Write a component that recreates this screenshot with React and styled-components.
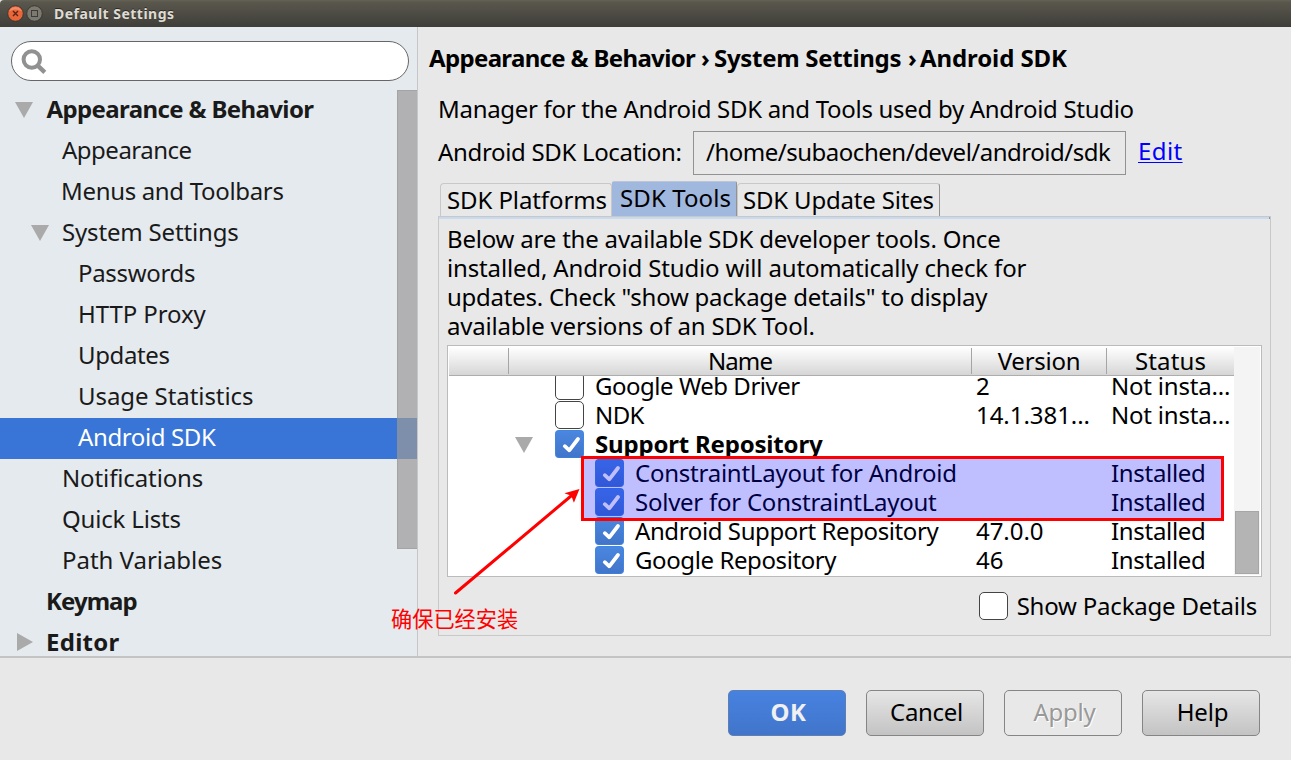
import React from 'react';
import styled, { createGlobalStyle, css } from 'styled-components';

const GlobalStyle = createGlobalStyle`
  * { box-sizing: border-box; }
  body {
    margin: 0;
    background: #e8e8e8;
    color: #000;
    font: 24px/33px "Noto Sans", "Noto Sans CJK SC", sans-serif;
    overflow: hidden;
  }
`;

const Window = styled.div`
  position: relative;
  width: 1291px;
  height: 760px;
  display: flex;
  flex-direction: column;
  background: #e8e8e8;
  overflow: hidden;
`;

const Text = styled.span`
  display: block;
  white-space: pre;
  letter-spacing: ${(p) => p.$ls || 0}px;
  margin-left: ${(p) => p.$ml || 0}px;
  font-weight: ${(p) => (p.$bold ? 700 : 400)};
`;

const TitleBar = styled.header`
  flex: none;
  height: 27px;
  display: flex;
  align-items: center;
  padding-left: 7px;
  background: linear-gradient(#656356 0, #5a584d 2px, #3e3d39 100%);
  color: #dfdbd2;
  font-size: 14px;
  line-height: 26px;
  border-top-left-radius: 4px;
`;

const TitleText = styled(Text)`
  text-shadow: 0 -1px 0 #2c2b28;
`;

const WindowButton = styled.svg`
  width: 17px;
  height: 17px;
  margin-right: 2px;
`;

const Body = styled.div`
  flex: none;
  height: 631px;
  display: flex;
  border-bottom: 2px solid #c4c4c4;
`;

const Sidebar = styled.aside`
  position: relative;
  flex: none;
  width: 418px;
  padding-top: 14px;
  background: #e5eaee;
  border-right: 1px solid #c4c6c8;
  color: #1a1a1a;
  overflow: hidden;
`;

const Search = styled.div`
  width: 398px;
  height: 40px;
  margin: 0 0 9px 11px;
  padding: 7px 0 0 9px;
  border: 1px solid #666;
  border-radius: 20px;
  background: #fff;
`;

const TreeRow = styled.div`
  display: flex;
  height: 41px;
  padding: 2px 0 0 ${(p) => p.$indent}px;
  ${(p) => p.$selected && css`
    background: #3875d7;
    color: #fff;
  `}
`;

const TreeArrow = styled.svg`
  flex: none;
  width: 18px;
  height: 18px;
  margin: 8px 13px 0 0;
`;

const SidebarScroll = styled.div`
  position: absolute;
  right: 0;
  top: 63px;
  width: 20px;
  height: 459px;
  background: rgba(155, 154, 155, 0.71);
  border: 1px solid rgba(140, 140, 140, 0.35);
  border-right: 0;
`;

const Main = styled.main`
  flex: 1;
  padding: 14px 20px 0 20px;
`;

const Breadcrumb = styled.nav`
  display: flex;
  margin: 0 0 18px -9px;
`;

const Crumb = styled(Text)`
  width: ${(p) => p.$w}px;
`;

const LocationRow = styled.div`
  display: flex;
  height: 44px;
  margin-top: 6px;
`;

const LocationLabel = styled(Text)`
  width: 255px;
  padding-top: 4px;
`;

const PathField = styled.div`
  width: 433px;
  border: 1px solid #929292;
  padding: 3px 0 0 12px;
`;

const EditLink = styled(Text)`
  padding-top: 3px;
  color: #00f;
  text-decoration: underline;
  text-decoration-thickness: 1px;
  text-underline-offset: 2px;
  text-decoration-skip-ink: none;
`;

const Tabs = styled.div`
  display: flex;
  align-items: flex-end;
  height: 35px;
  margin-top: 6px;
  padding-left: 2px;
`;

const Tab = styled.div`
  width: ${(p) => p.$w}px;
  height: 33px;
  padding-left: ${(p) => p.$pl}px;
  line-height: 31px;
  border: 1px solid #c8c8c8;
  border-bottom: 0;
  border-right-color: ${(p) => (p.$last ? '#929292' : '#c8c8c8')};
  border-radius: 4px 3px 0 0;
  ${(p) => p.$active && css`
    height: 35px;
    background: #a0b7de;
    border-color: #a0b7de;
    border-top-color: #bcc6d8;
    border-right-color: #929292;
    border-radius: 2px 2px 0 0;
  `}
`;

const Panel = styled.section`
  height: 420px;
  width: 833px;
  padding: 0 8px;
  border: 1px solid #c8c8c8;
`;

const PanelAccent = styled.div`
  height: 2px;
  margin: 0 -8px 5px;
  background: #c8daf0;
  border-right: 1px solid #929292;
`;

const Line = styled(Text)`
  line-height: 29px;
`;

const Table = styled.div`
  display: flex;
  width: 815px;
  height: 232px;
  margin-top: 5px;
  padding: 1px;
  border: 1px solid #bbb;
  background: #fff;
`;

const Grid = styled.div`
  width: 785px;
`;

const HeaderRow = styled.div`
  display: flex;
  height: 29px;
  padding-top: 1px;
  background: linear-gradient(#fff, #d6d6d6);
  border-bottom: 1px solid #adadad;
`;

const HeaderCell = styled.div`
  width: ${(p) => p.$w}px;
  height: 26px;
  display: flex;
  justify-content: center;
  line-height: 26px;
  border-right: ${(p) => (p.$last ? 0 : 1)}px solid #a5a5a5;
`;

const Rows = styled.div`
  height: 200px;
  overflow: hidden;
`;

const Row = styled.div`
  display: flex;
  height: 29px;
  line-height: 29px;
  &:first-child { margin-top: -5px; }
`;

const NameCell = styled.div`
  display: flex;
  width: 525px;
  padding-left: ${(p) => p.$indent}px;
`;

const VersionCell = styled.div`
  width: 135px;
  padding-left: 2px;
`;

const StatusCell = styled.div`
  padding-left: 2px;
`;

const TableArrow = styled.svg`
  width: 18px;
  height: 18px;
  margin: 6px 22px 0 0;
`;

const Box = styled.span`
  flex: none;
  display: block;
  width: 29px;
  height: 28px;
  margin: 1px 11px 0 0;
  border: 1px solid #444;
  border-radius: 5px;
  background: #fff;
  ${(p) => p.$checked && css`
    border-color: #3f86e0;
    border-bottom-color: #3c7edb;
    border-radius: 4px;
    background: linear-gradient(#4a87e0, #4175ca);
  `}
  svg { display: block; }
`;

const Track = styled.div`
  width: 26px;
  height: 228px;
  padding: 164px 1px 0;
  background: #f4f4f4;
`;

const Thumb = styled.div`
  height: 63px;
  background: #b4b4b4;
  border: 1px solid #a6a6a6;
`;

const DetailsOption = styled.label`
  display: flex;
  justify-content: flex-end;
  margin-top: 14px;
  padding-right: 5px;
`;

const DetailsText = styled(Text)`
  line-height: 29px;
`;

const Footer = styled.footer`
  display: flex;
  justify-content: flex-end;
  gap: 20px;
  padding: 32px 31px 0 0;
`;

const Button = styled.button`
  width: 118px;
  height: 46px;
  padding: 0 0 3px 3px;
  display: flex;
  justify-content: center;
  align-items: center;
  border: 1px solid #858585;
  border-radius: 5px;
  background: linear-gradient(#e6e6e6, #c3c3c3);
  color: #000;
  font: inherit;
  ${(p) => p.$primary && css`
    border-color: #5f7fb3;
    background: linear-gradient(#4782e0, #4175ca);
    color: #f0f0f0;
  `}
  ${(p) => p.$disabled && css`
    background: transparent;
    color: #999;
    text-shadow: 1px 1px 0 #fff;
  `}
`;

const Highlight = styled.div`
  position: absolute;
  left: 581px;
  top: 456px;
  width: 643px;
  height: 65px;
  border: 3px solid #f00;
  background: rgba(0, 0, 255, 0.25);
`;

const Arrow = styled.svg`
  position: absolute;
  left: 440px;
  top: 480px;
  width: 150px;
  height: 125px;
`;

const Note = styled.div`
  position: absolute;
  left: 391px;
  top: 602px;
  color: #f00;
  font: 21.2px/32px "Noto Sans CJK SC", sans-serif;
  white-space: nowrap;
`;

const Down = ({ as: C }) => (
  <C viewBox="0 0 18 18"><path d="M0 2H18L9 18Z" fill="#aaa" /></C>
);
const Right = ({ as: C }) => (
  <C viewBox="0 0 18 18"><path d="M2 0V18L18 9Z" fill="#aaa" /></C>
);

const Check = ({ checked }) => (
  <Box $checked={checked}>
    {checked && (
      <svg width="27" height="26" viewBox="0 0 27 26">
        <path d="M8.8 15.2L13.3 19.3L22 8" fill="none" stroke="#3a66b4" strokeWidth="3.6" strokeLinecap="round" strokeLinejoin="round" opacity=".45" transform="translate(0 1)" />
        <path d="M8.8 15.2L13.3 19.3L22 8" fill="none" stroke="#fff" strokeWidth="3.8" strokeLinecap="round" strokeLinejoin="round" />
      </svg>
    )}
  </Box>
);

const tree = [
  { t: 'Appearance & Behavior', indent: 15, arrow: 'down', bold: true, ls: -0.62, ml: 0.5 },
  { t: 'Appearance', indent: 62, ls: -0.5 },
  { t: 'Menus and Toolbars', indent: 61, ls: -0.33 },
  { t: 'System Settings', indent: 31, arrow: 'down', ls: -0.17 },
  { t: 'Passwords', indent: 78, ls: -0.32 },
  { t: 'HTTP Proxy', indent: 78, ls: -0.1 },
  { t: 'Updates', indent: 78, ls: -0.37 },
  { t: 'Usage Statistics', indent: 78, ls: -0.07 },
  { t: 'Android SDK', indent: 78, ls: -0.38, selected: true },
  { t: 'Notifications', indent: 62, ls: -0.12 },
  { t: 'Quick Lists', indent: 62, ls: -0.18 },
  { t: 'Path Variables', indent: 62, ls: -0.03 },
  { t: 'Keymap', indent: 46, bold: true, ls: -0.95 },
  { t: 'Editor', indent: 15, arrow: 'right', bold: true, ls: 0.26 },
];

const packages = [
  { t: 'Google Web Driver', ls: -0.48, indent: 106, version: '2', status: 'Not insta...' },
  { t: 'NDK', ls: -0.6, indent: 106, version: '14.1.381...', status: 'Not insta...' },
  { t: 'Support Repository', ls: -0.19, indent: 66, parent: true, checked: true },
  { t: 'ConstraintLayout for Android', ls: -0.24, indent: 146, checked: true, status: 'Installed' },
  { t: 'Solver for ConstraintLayout', ls: -0.25, indent: 146, checked: true, status: 'Installed' },
  { t: 'Android Support Repository', ls: -0.4, indent: 146, checked: true, version: '47.0.0', status: 'Installed' },
  { t: 'Google Repository', ls: -0.4, indent: 146, checked: true, version: '46', status: 'Installed' },
];

export default function App() {
  return (
    <Window>
      <GlobalStyle />
      <TitleBar>
        <WindowButton viewBox="0 0 17 17">
          <circle cx="8.5" cy="8.5" r="7.8" fill="#e9653a" stroke="#35342f" strokeWidth=".9" />
          <path d="M2 6.5A7 7 0 0 1 15 6.5A12 12 0 0 0 2 6.5Z" fill="#f49a78" opacity=".7" />
          <path d="M6 6L11 11M11 6L6 11" stroke="#5b2412" strokeWidth="1.4" />
        </WindowButton>
        <WindowButton viewBox="0 0 17 17">
          <circle cx="8.5" cy="8.5" r="7.8" fill="#7b7970" stroke="#35342f" strokeWidth=".9" />
          <rect x="5.5" y="5.5" width="6" height="6" fill="none" stroke="#3c3b37" />
        </WindowButton>
        <TitleText $bold $ls={0.48} $ml={9}>Default Settings</TitleText>
      </TitleBar>

      <Body>
        <Sidebar>
          <Search>
            <svg width="28" height="28" viewBox="0 0 28 28">
              <circle cx="10.8" cy="10.5" r="8.2" fill="none" stroke="#919191" strokeWidth="4" />
              <path d="M16.5 16.4L23.8 23.3" stroke="#919191" strokeWidth="4.4" />
            </svg>
          </Search>
          {tree.map((r) => (
            <TreeRow key={r.t} $indent={r.indent} $selected={r.selected}>
              {r.arrow === 'down' && <Down as={TreeArrow} />}
              {r.arrow === 'right' && <Right as={TreeArrow} />}
              <Text $bold={r.bold} $ls={r.ls} $ml={r.ml}>{r.t}</Text>
            </TreeRow>
          ))}
          <SidebarScroll />
        </Sidebar>

        <Main>
          <Breadcrumb>
            <Crumb $bold $ls={-0.66} $w={272}>Appearance & Behavior</Crumb>
            <Crumb $bold $w={13}>›</Crumb>
            <Crumb $bold $ls={-0.3} $w={194}>System Settings</Crumb>
            <Crumb $bold $w={12}>›</Crumb>
            <Crumb $bold $ls={-0.1} $w={160}>Android SDK</Crumb>
          </Breadcrumb>
          <Text $ls={-0.3}>Manager for the Android SDK and Tools used by Android Studio</Text>
          <LocationRow>
            <LocationLabel $ls={-0.33}>Android SDK Location:</LocationLabel>
            <PathField><Text $ls={-0.49}>/home/subaochen/devel/android/sdk</Text></PathField>
            <EditLink $ls={0.4} $ml={12}>Edit</EditLink>
          </LocationRow>
          <Tabs>
            <Tab $w={172} $pl={6}><Text $ls={-0.1}>SDK Platforms</Text></Tab>
            <Tab $w={125} $pl={7} $active><Text $ls={0.1}>SDK Tools</Text></Tab>
            <Tab $w={203} $pl={5} $last><Text $ls={-0.19}>SDK Update Sites</Text></Tab>
          </Tabs>
          <Panel>
            <PanelAccent />
            <Line $ls={-0.2}>Below are the available SDK developer tools. Once</Line>
            <Line $ls={-0.15}>installed, Android Studio will automatically check for</Line>
            <Line $ls={-0.25}>updates. Check "show package details" to display</Line>
            <Line $ls={-0.21}>available versions of an SDK Tool.</Line>
            <Table>
              <Grid>
                <HeaderRow>
                  <HeaderCell $w={60} />
                  <HeaderCell $w={463}><Text $ls={-0.88}>Name</Text></HeaderCell>
                  <HeaderCell $w={135}><Text $ls={-0.26}>Version</Text></HeaderCell>
                  <HeaderCell $w={127} $last><Text $ls={0.14}>Status</Text></HeaderCell>
                </HeaderRow>
                <Rows>
                  {packages.map((p) => (
                    <Row key={p.t}>
                      <NameCell $indent={p.indent}>
                        {p.parent && <Down as={TableArrow} />}
                        <Check checked={p.checked} />
                        <Text $bold={p.parent} $ls={p.ls}>{p.t}</Text>
                      </NameCell>
                      <VersionCell><Text $ls={-0.05}>{p.version}</Text></VersionCell>
                      <StatusCell>
                        <Text $ls={p.status === 'Installed' ? -0.31 : -0.2}>{p.status}</Text>
                      </StatusCell>
                    </Row>
                  ))}
                </Rows>
              </Grid>
              <Track><Thumb /></Track>
            </Table>
            <DetailsOption>
              <Check />
              <DetailsText $ls={-0.21} $ml={-2}>Show Package Details</DetailsText>
            </DetailsOption>
          </Panel>
        </Main>
      </Body>

      <Footer>
        <Button $primary><Text $bold $ls={0.5}>OK</Text></Button>
        <Button><Text $ls={-0.3}>Cancel</Text></Button>
        <Button $disabled><Text $ls={-0.26}>Apply</Text></Button>
        <Button><Text $ls={-0.17}>Help</Text></Button>
      </Footer>

      <Highlight />
      <Arrow viewBox="440 480 150 125">
        <path d="M455.5 593L574 493.5" stroke="#f00" strokeWidth="3" strokeLinecap="round" />
        <path d="M579.5 489L564.4 493.2L571.3 495.7L573.9 502.8Z" fill="#f00" />
      </Arrow>
      <Note>确保已经安装</Note>
    </Window>
  );
}
